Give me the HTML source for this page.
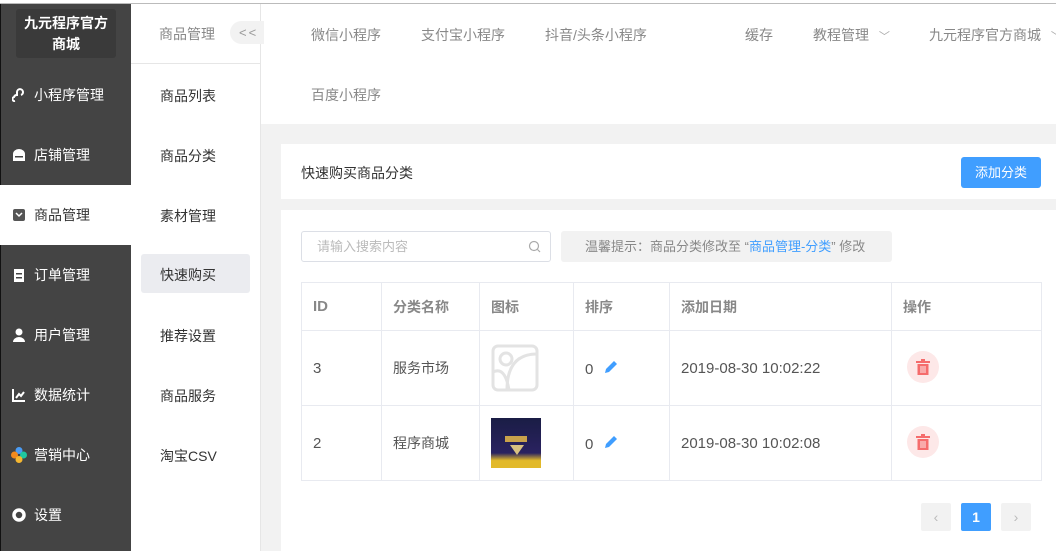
<!DOCTYPE html>
<html><head><meta charset="utf-8"><style>
*{margin:0;padding:0;box-sizing:border-box}
body{width:1056px;height:551px;overflow:hidden;background:#fff;font-family:"Liberation Sans","Noto Sans CJK SC",sans-serif;font-size:14px;position:relative;color:#333}
.a{position:absolute}
.topline{left:0;top:3px;width:1056px;height:1px;background:#bbb}
.sb{left:0;top:4px;width:131px;height:547px;background:#444;border-left:1px solid #111}
.logo{left:16px;top:9px;width:100px;height:49px;background:#3a3a3a;border-radius:3px;color:#fff;font-weight:bold;font-size:14px;text-align:center;line-height:21px;padding-top:4px}
.mi{left:0;width:131px;height:60px;color:#fff;font-size:14px;line-height:60px;padding-left:34px}
.mi.act{background:#fff;color:#333}
.ic{position:absolute;left:12px;top:23px;width:14px;height:14px}
.sb2{left:131px;top:4px;width:130px;height:547px;background:#fff;border-right:1px solid #e6e6e6}
.s2{left:160px;color:#333;font-size:14px}
.nav{color:#888;font-size:14px}
.gray{background:#f2f2f2}
th,td{border:1px solid #e8eaf0;text-align:left;padding-left:11px;font-size:14px}
th{color:#888;font-weight:bold;height:48px}
td{color:#555;height:75px}
td.n{font-size:15px}
table{border-collapse:collapse;position:absolute;left:301px;top:282px;width:741px}
.del{display:inline-block;width:32px;height:32px;border-radius:50%;background:#fde8e8;position:relative;margin-left:4px}
.pg{top:503px;width:30px;height:28px;border-radius:2px;background:#f2f2f2;text-align:center;line-height:28px;color:#bbb}
</style></head><body>
<div class="a topline"></div>
<div class="a sb"></div>
<div class="a logo">九元程序官方<br>商城</div>
<div class="a mi" style="top:65px"><svg class="ic" viewBox="0 0 14 14"><path d="M3 13a2 2 0 0 1-1-4 3 3 0 0 1 3-2V4a3 3 0 1 1 4 3" fill="none" stroke="#fff" stroke-width="2"/></svg>小程序管理</div>
<div class="a mi" style="top:125px"><svg class="ic" viewBox="0 0 14 14"><path d="M1 6a6 5 0 0 1 12 0v7H1z" fill="#fff"/><rect x="3" y="8" width="8" height="1.5" fill="#444"/></svg>店铺管理</div>
<div class="a mi act" style="top:185px"><svg class="ic" viewBox="0 0 14 14"><rect x="1" y="1" width="12" height="12" rx="2" fill="#555"/><path d="M4 5l3 3 3-3" stroke="#fff" stroke-width="1.5" fill="none"/></svg>商品管理</div>
<div class="a mi" style="top:245px"><svg class="ic" viewBox="0 0 14 14"><rect x="2" y="1" width="10" height="13" fill="#fff"/><rect x="4" y="5" width="6" height="1.5" fill="#444"/><rect x="4" y="9" width="6" height="1.5" fill="#444"/></svg>订单管理</div>
<div class="a mi" style="top:305px"><svg class="ic" viewBox="0 0 14 14"><circle cx="7" cy="4" r="3.5" fill="#fff"/><path d="M1 14a6 5 0 0 1 12 0z" fill="#fff"/></svg>用户管理</div>
<div class="a mi" style="top:365px"><svg class="ic" viewBox="0 0 14 14"><path d="M1 1v12h12" stroke="#fff" stroke-width="2" fill="none"/><path d="M4 10l3-4 2 2 3-4" stroke="#fff" stroke-width="2" fill="none"/></svg>数据统计</div>
<div class="a mi" style="top:425px"><svg class="ic" viewBox="0 0 16 16" style="width:16px;height:16px;top:22px;left:11px"><circle cx="8" cy="3.5" r="3.5" fill="#4a9cf5"/><circle cx="3.5" cy="8" r="3.5" fill="#f28a1e"/><circle cx="12.5" cy="8" r="3.5" fill="#1fc7a0"/><circle cx="8" cy="12.5" r="3.5" fill="#f5b731"/></svg>营销中心</div>
<div class="a mi" style="top:485px"><svg class="ic" viewBox="0 0 14 14"><circle cx="7" cy="7" r="5" fill="none" stroke="#fff" stroke-width="3.5"/></svg>设置</div>

<div class="a sb2"></div>
<div class="a" style="left:159px;top:24px;color:#888;font-size:14px">商品管理</div>
<div class="a" style="left:230px;top:21px;width:34px;height:23px;background:#f2f2f2;border-radius:12px 0 0 12px;color:#999;font-size:13px;line-height:23px;padding-left:9px;letter-spacing:2px">&lt;&lt;</div>
<div class="a" style="left:131px;top:63px;width:129px;height:1px;background:#e6e6e6"></div>
<div class="a s2" style="top:86px">商品列表</div>
<div class="a s2" style="top:146px">商品分类</div>
<div class="a s2" style="top:206px">素材管理</div>
<div class="a" style="left:141px;top:254px;width:109px;height:39px;background:#ebecf0;border-radius:3px"></div>
<div class="a s2" style="top:265px">快速购买</div>
<div class="a s2" style="top:326px">推荐设置</div>
<div class="a s2" style="top:386px">商品服务</div>
<div class="a s2" style="top:446px">淘宝CSV</div>

<div class="a nav" style="left:311px;top:25px">微信小程序</div>
<div class="a nav" style="left:421px;top:25px">支付宝小程序</div>
<div class="a nav" style="left:545px;top:25px">抖音/头条小程序</div>
<div class="a nav" style="left:745px;top:25px">缓存</div>
<div class="a nav" style="left:813px;top:25px">教程管理 <span style="font-size:11px;margin-left:6px;color:#aaa">﹀</span></div>
<div class="a nav" style="left:929px;top:25px;white-space:nowrap">九元程序官方商城 <span style="font-size:11px;margin-left:6px;color:#aaa">﹀</span></div>
<div class="a nav" style="left:311px;top:85px">百度小程序</div>

<div class="a gray" style="left:261px;top:124px;width:795px;height:427px"></div>
<div class="a" style="left:281px;top:144px;width:775px;height:55px;background:#fff"></div>
<div class="a" style="left:301px;top:163px;font-size:14px;color:#333">快速购买商品分类</div>
<div class="a" style="left:961px;top:157px;width:80px;height:31px;background:#409eff;border-radius:3px;color:#fff;font-size:13px;text-align:center;line-height:31px">添加分类</div>
<div class="a" style="left:281px;top:210px;width:775px;height:341px;background:#fff"></div>

<div class="a" style="left:301px;top:231px;width:250px;height:31px;border:1px solid #dcdfe6;border-radius:3px;color:#bbb;font-size:13px;line-height:29px;padding-left:15px">请输入搜索内容<svg style="position:absolute;right:9px;top:8px" width="13" height="13" viewBox="0 0 13 13"><circle cx="6" cy="6" r="4.5" fill="none" stroke="#aaa" stroke-width="1.2"/><path d="M9.5 9.5l2.5 2.5" stroke="#aaa" stroke-width="1.2"/></svg></div>
<div class="a" style="left:561px;top:231px;width:331px;height:31px;background:#f2f2f2;border-radius:3px;color:#888;font-size:13px;line-height:31px;padding-left:24px">温馨提示：商品分类修改至 “<span style="color:#409eff">商品管理-分类</span>” 修改</div>

<table>
<tr><th style="width:80px;font-size:15px">ID</th><th style="width:98px">分类名称</th><th style="width:94px">图标</th><th style="width:96px">排序</th><th style="width:222px">添加日期</th><th>操作</th></tr>
<tr><td class="n">3</td><td>服务市场</td><td><svg width="48" height="48" viewBox="0 0 48 48" style="display:block"><rect x="2" y="2" width="44" height="44" rx="5" fill="none" stroke="#e3e3e3" stroke-width="3"/><circle cx="15" cy="15" r="6" fill="none" stroke="#e3e3e3" stroke-width="3"/><path d="M2 28q12-6 16 18M16 46q0-36 30-36" fill="none" stroke="#e3e3e3" stroke-width="3"/></svg></td><td class="n">0 <svg width="16" height="16" viewBox="0 0 16 16" style="margin-left:5px;vertical-align:-1px"><path d="M2 14l1-4 8-8 3 3-8 8z" fill="#409eff"/></svg></td><td class="n">2019-08-30 10:02:22</td><td><span class="del"><svg style="position:absolute;left:9px;top:8px" width="14" height="16" viewBox="0 0 14 16"><rect x="0" y="2" width="14" height="2" fill="#f56c6c"/><rect x="5" y="0" width="4" height="2" fill="#f56c6c"/><path d="M1.5 5h11v11h-11z" fill="#f56c6c"/><path d="M5 7v7M7 7v7M9 7v7" stroke="#fde8e8" stroke-width="1"/></svg></span></td></tr>
<tr><td class="n">2</td><td>程序商城</td><td><div style="width:50px;height:50px;background:linear-gradient(#1a1d45,#2a2260 70%,#e2b92a 85%);position:relative"><div style="position:absolute;left:14px;top:18px;width:22px;height:6px;background:#c9a24b"></div><div style="position:absolute;left:19px;top:27px;border-left:7px solid transparent;border-right:7px solid transparent;border-top:10px solid #d8c080"></div></div></td><td class="n">0 <svg width="16" height="16" viewBox="0 0 16 16" style="margin-left:5px;vertical-align:-1px"><path d="M2 14l1-4 8-8 3 3-8 8z" fill="#409eff"/></svg></td><td class="n">2019-08-30 10:02:08</td><td><span class="del"><svg style="position:absolute;left:9px;top:8px" width="14" height="16" viewBox="0 0 14 16"><rect x="0" y="2" width="14" height="2" fill="#f56c6c"/><rect x="5" y="0" width="4" height="2" fill="#f56c6c"/><path d="M1.5 5h11v11h-11z" fill="#f56c6c"/><path d="M5 7v7M7 7v7M9 7v7" stroke="#fde8e8" stroke-width="1"/></svg></span></td></tr>
</table>

<div class="a pg" style="left:921px">‹</div>
<div class="a pg" style="left:961px;background:#409eff;color:#fff;font-weight:bold">1</div>
<div class="a pg" style="left:1001px">›</div>
</body></html>
